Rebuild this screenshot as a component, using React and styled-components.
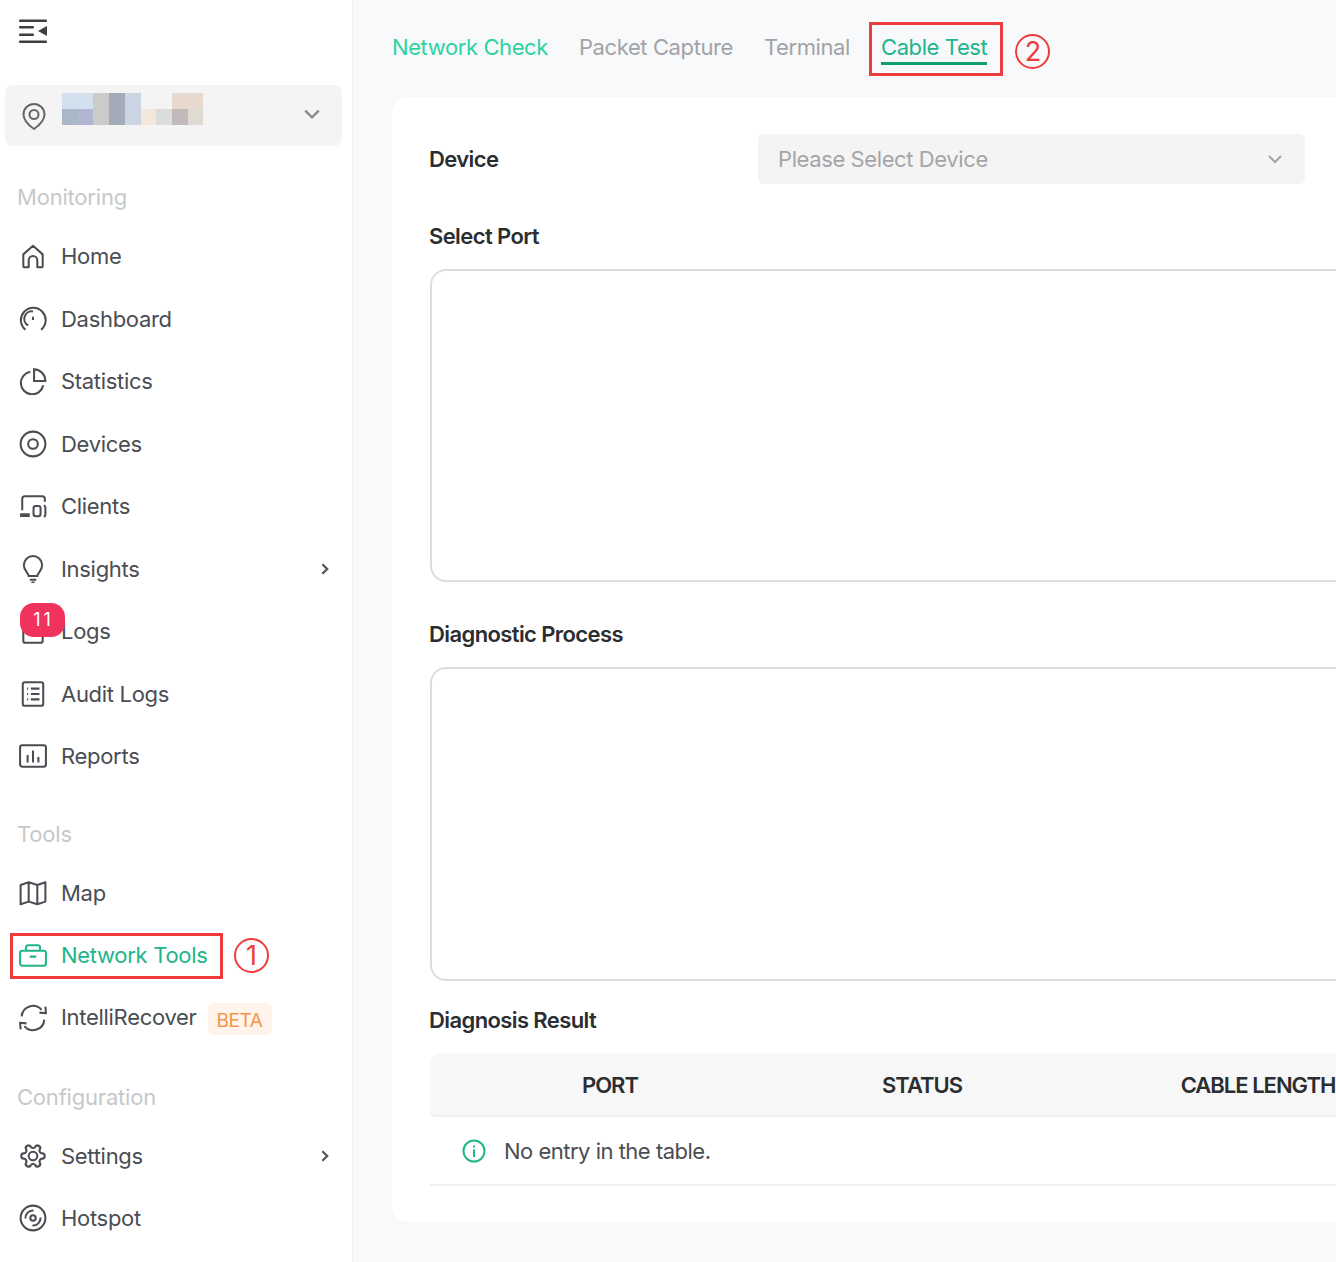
import styled, { createGlobalStyle } from "styled-components";

const GREEN = "#21b58a";
const RED = "#ee3b3b";

const icons = {
    home: <path d="M4 22V11.5L13 3.500l9 8V22a1.500 1.500 0 0 1-1.500 1.500H17V17a4 4 0 0 0-8 0v6.500H5.500A1.500 1.500 0 0 1 4 22z" strokeLinejoin="round" />,
    dashboard: <path d="M6 23a11.500 11.500 0 1 1 14.500 0M8.500 19a7 7 0 0 1 4.500-13M13 11v3" />,
    statistics: <path d="M10.500 4.500a10.500 10.500 0 1 0 12 12.500M14 2v11h10.500A11 11 0 0 0 14 2z" />,
    devices: <><circle cx="13" cy="13" r="11.500" /><circle cx="13" cy="13" r="4.500" /></>,
    clients: <><path d="M3 17V6.500A2.500 2.500 0 0 1 5.500 4h16A2.500 2.500 0 0 1 24 6.500V9" /><rect x="13.500" y="13" width="6.500" height="9.500" rx="2" /><path d="M23 12.500a2 2 0 0 1 1.500 2V21a2 2 0 0 1-1.500 2" /><path d="M1 21.500h9" strokeWidth="3.500" /></>,
    insights: <path d="M9 19.500c0-3-4.500-4.500-4.500-10a8.500 8.500 0 0 1 17 0c0 5.500-4.500 7-4.500 10zM10 23h6M11.500 25.500h3" />,
    logs: <path d="M4 8h18v14a2 2 0 0 1-2 2H6a2 2 0 0 1-2-2z" />,
    audit: <><rect x="3.500" y="2" width="19" height="22" rx="2" /><path d="M7.500 8h1M11 8h8M7.500 13h1M11 13h8M7.500 18h1M11 18h8" /></>,
    reports: <><rect x="1" y="3" width="24" height="20" rx="2" /><path d="M8 12v7M13 8v11M18 14v5" /></>,
    map: <path d="M1.500 5.500 9 3l8 2.500L24.500 3v18L17 23.500 9 21l-7.500 2.500zM9 3v18M17 5.500v18" strokeLinejoin="round" />,
    tools: <><rect x="1" y="9" width="24" height="14" rx="2" /><path d="M6.500 9V6a2 2 0 0 1 2-2h9a2 2 0 0 1 2 2v3M10 14.500h6" /></>,
    recover: <path d="M2.500 11.500A10.500 10.500 0 0 1 21 5.500M23.500 14.500A10.500 10.500 0 0 1 5 20.500M19 8l6 .5L24.500 2.500M7 18l-6-.5.500 6" />,
    settings: <><g transform="rotate(90 13 13) scale(1.083)" strokeWidth="1.850"><path d="M12.220 2h-.44a2 2 0 0 0-2 2v.18a2 2 0 0 1-1 1.730l-.43.250a2 2 0 0 1-2 0l-.150-.08a2 2 0 0 0-2.730.730l-.220.380a2 2 0 0 0 .730 2.730l.150.100a2 2 0 0 1 1 1.720v.510a2 2 0 0 1-1 1.740l-.150.090a2 2 0 0 0-.730 2.730l.220.380a2 2 0 0 0 2.730.730l.150-.08a2 2 0 0 1 2 0l.430.250a2 2 0 0 1 1 1.730V20a2 2 0 0 0 2 2h.440a2 2 0 0 0 2-2v-.18a2 2 0 0 1 1-1.730l.430-.250a2 2 0 0 1 2 0l.150.080a2 2 0 0 0 2.730-.730l.220-.390a2 2 0 0 0-.730-2.730l-.150-.080a2 2 0 0 1-1-1.740v-.5a2 2 0 0 1 1-1.740l.150-.090a2 2 0 0 0 .730-2.730l-.220-.380a2 2 0 0 0-2.730-.730l-.150.080a2 2 0 0 1-2 0l-.430-.250a2 2 0 0 1-1-1.730V4a2 2 0 0 0-2-2z" /></g><circle cx="13" cy="13" r="4" /></>,
    hotspot: <><circle cx="13" cy="13" r="11.500" /><path d="M6 13.500A7 7 0 0 1 13.500 6M20 12.500A7 7 0 0 1 12.500 20" /><circle cx="13" cy="13" r="2.500" /></>,
};

const monitoring = [
    { name: "Home", icon: "home" },
    { name: "Dashboard", icon: "dashboard" },
    { name: "Statistics", icon: "statistics" },
    { name: "Devices", icon: "devices" },
    { name: "Clients", icon: "clients" },
    { name: "Insights", icon: "insights", more: true },
    { name: "Logs", icon: "logs", count: 11 },
    { name: "Audit Logs", icon: "audit" },
    { name: "Reports", icon: "reports" },
];

const tools = [
    { name: "Map", icon: "map" },
    { name: "Network Tools", icon: "tools", active: true, mark: "1" },
    { name: "IntelliRecover", icon: "recover", beta: true },
];

const configuration = [
    { name: "Settings", icon: "settings", more: true },
    { name: "Hotspot", icon: "hotspot" },
];

const blurred = [
    [62, 93, 31, 16, "#d3e1ee"], [93, 93, 16, 16, "#cbcbcb"], [109, 93, 16, 16, "#a3aab8"], [125, 93, 16, 16, "#cad4e2"],
    [172, 93, 31, 16, "#e8d9ce"], [141, 93, 31, 16, "#f2f4f4"],
    [62, 109, 16, 16, "#a9b8c6"], [78, 109, 16, 16, "#b2b6d2"], [93, 109, 16, 16, "#cbcbcb"], [109, 109, 16, 16, "#a3aab8"], [125, 109, 16, 16, "#cad4e2"],
    [141, 109, 16, 16, "#f3e7dc"], [156, 109, 16, 16, "#dcdcdc"], [172, 109, 16, 16, "#c2b9bc"], [188, 109, 15, 16, "#dfdbd2"],
];

function Chevron({ size = 16, turned }) {
    return (
        <svg width={size} height={size} viewBox="0 0 16 16" fill="none" stroke="currentColor" strokeWidth={turned ? 2.600 : 2}>
            <path d={turned ? "M5 2.500 10.500 8 5 13.500" : "M2 5l6 6 6-6"} />
        </svg>
    );
}

function NavRow({ item }) {
    return (
        <NavItem $active={item.active}>
            <NavIcon width="28" height="28" viewBox="0 0 26 26" fill="none" stroke="currentColor" strokeWidth="1.900">
                {icons[item.icon]}
            </NavIcon>
            {item.count && <CountBadge>{item.count}</CountBadge>}
            <NavLabel $raised={item.beta}>{item.name}</NavLabel>
            {item.beta && <BetaTag>BETA</BetaTag>}
            {item.more && <More><Chevron size={14} turned /></More>}
            {item.active && <NavFrame />}
            {item.mark && <NavMark>{item.mark}</NavMark>}
        </NavItem>
    );
}

export default function App() {
    return (
        <>
            <GlobalStyle />
            <Page>
                <Sidebar>
                    <Toggle>
                        <svg width="28" height="26" viewBox="0 0 28 26" fill="#3f3f3f">
                            <rect x="0" y="1.500" width="28" height="2.500" rx="1" />
                            <rect x="0" y="8" width="15" height="2.500" rx="1" />
                            <rect x="0" y="15.500" width="15" height="2.500" rx="1" />
                            <rect x="0" y="22.500" width="28" height="2.500" rx="1" />
                            <path d="M28 8v10l-9-5z" />
                        </svg>
                    </Toggle>
                    <SitePicker>
                        <svg width="26" height="30" viewBox="0 0 26 30" fill="none" stroke="#666" strokeWidth="2">
                            <path d="M13 28 C6 23 2.500 18 2.500 13.500a10.500 10.500 0 0 1 21 0c0 4.500-3.500 9.500-10.500 14.500z" strokeLinejoin="round" />
                            <circle cx="13" cy="13.500" r="4.500" />
                        </svg>
                        <PickerChevron><Chevron size={18} /></PickerChevron>
                        <SiteName width="141" height="32" viewBox="62 93 141 32">
                            {blurred.map(([x, y, w, h, fill], i) => (
                                <rect key={i} x={x} y={y} width={w} height={h} fill={fill} />
                            ))}
                        </SiteName>
                    </SitePicker>

                    <SectionLabel $gap={37}>Monitoring</SectionLabel>
                    {monitoring.map(item => <NavRow key={item.name} item={item} />)}
                    <SectionLabel $gap={32}>Tools</SectionLabel>
                    {tools.map(item => <NavRow key={item.name} item={item} />)}
                    <SectionLabel $gap={33.5}>Configuration</SectionLabel>
                    {configuration.map(item => <NavRow key={item.name} item={item} />)}
                </Sidebar>

                <Main>
                    <Tabs>
                        <Tab $color="#2ed3a0">Network Check</Tab>
                        <Tab>Packet Capture</Tab>
                        <Tab>Terminal</Tab>
                        <Tab $color={GREEN} $selected>
                            Cable Test
                            <TabFrame />
                            <TabMark>2</TabMark>
                        </Tab>
                    </Tabs>

                    <Card>
                        <DeviceRow>
                            <FieldLabel>Device</FieldLabel>
                            <Select>
                                Please Select Device
                                <Chevron size={16} />
                            </Select>
                        </DeviceRow>

                        <SectionTitle $gap={38}>Select Port</SectionTitle>
                        <Panel $height={313} />
                        <SectionTitle $gap={38}>Diagnostic Process</SectionTitle>
                        <Panel $height={314} />
                        <SectionTitle $gap={25}>Diagnosis Result</SectionTitle>

                        <TableHead>
                            <HeadCell>PORT</HeadCell>
                            <HeadCell>STATUS</HeadCell>
                            <HeadCell>CABLE LENGTH</HeadCell>
                        </TableHead>
                        <EmptyRow>
                            <svg width="24" height="24" viewBox="0 0 24 24" fill="none" stroke={GREEN} strokeWidth="2">
                                <circle cx="12" cy="12" r="10.500" />
                                <path d="M12 10.500V18M12 6.500v2" />
                            </svg>
                            No entry in the table.
                        </EmptyRow>
                    </Card>
                </Main>
            </Page>
        </>
    );
}

const GlobalStyle = createGlobalStyle`
    html, body {
        margin: 0;
        padding: 0;
        background: #f8f9fb;
    }

    * {
        box-sizing: border-box;
    }
`;

const Page = styled.div`
    display: flex;
    width: 1336px;
    height: 1262px;
    overflow: hidden;
    font-family: Inter, "Liberation Sans", sans-serif;
`;

const Sidebar = styled.aside`
    flex: 0 0 353px;
    height: 100%;
    background: #fff;
    border-right: 1px solid #eceef0;
`;

const Toggle = styled.div`
    height: 85px;
    padding: 18px 0 0 19px;
`;

const SitePicker = styled.div`
    position: relative;
    display: flex;
    align-items: center;
    width: 337px;
    height: 61px;
    margin-left: 5px;
    padding-left: 16px;
    background: #f4f4f4;
    border-radius: 8px;
`;

const SiteName = styled.svg`
    position: absolute;
    left: 57px;
    top: 8px;
`;

const PickerChevron = styled.span`
    position: absolute;
    right: 21px;
    top: 20px;
    color: #8a8a8a;
`;

const SectionLabel = styled.div`
    height: 28px;
    margin: ${props => props.$gap}px 0 14px 17px;
    color: #c6c8ca;
    font-size: 22px;
    line-height: 28px;
    letter-spacing: -0.2px;
`;

const NavItem = styled.div`
    position: relative;
    display: flex;
    align-items: center;
    height: 62.5px;
    padding-left: 19px;
    color: ${props => props.$active ? GREEN : "#4a4d52"};
`;

const NavIcon = styled.svg`
    flex: none;
    margin-right: 14px;
`;

const NavLabel = styled.span`
    font-size: 22px;
    letter-spacing: -0.3px;
    margin-top: ${props => props.$raised ? "-2px" : "0"};
`;

const CountBadge = styled.span`
    position: absolute;
    left: 20px;
    top: 3px;
    width: 45px;
    height: 34px;
    padding-left: 2px;
    background: #f0325e;
    border-radius: 14px;
    color: #fff;
    font-size: 18px;
    line-height: 34px;
    letter-spacing: 3px;
    text-align: center;
`;

const BetaTag = styled.span`
    margin: 2px 0 0 11px;
    padding: 0 9px;
    height: 32px;
    background: #fff3ea;
    border-radius: 5px;
    color: #f5954a;
    font-size: 19px;
    line-height: 35px;
    letter-spacing: -0.4px;
`;

const More = styled.span`
    position: absolute;
    right: 20px;
    top: 24px;
    color: #555;
    line-height: 0;
`;

const NavFrame = styled.span`
    position: absolute;
    left: 10px;
    top: 8.5px;
    width: 213px;
    height: 46px;
    border: 3px solid ${RED};
`;

const NavMark = styled.span`
    position: absolute;
    left: 234px;
    top: 14px;
    width: 35px;
    height: 35px;
    border: 2px solid ${RED};
    border-radius: 50%;
    color: ${RED};
    font-size: 27px;
    line-height: 31px;
    text-align: center;
`;

const Main = styled.main`
    flex: 1;
    min-width: 0;
    overflow: hidden;
    padding-left: 39px;
`;

const Tabs = styled.nav`
    display: flex;
    gap: 31px;
    height: 97px;
    padding-top: 33px;
`;

const Tab = styled.div`
    position: relative;
    height: 32px;
    color: ${props => props.$color || "#a1a3a6"};
    font-size: 22px;
    line-height: 28px;
    letter-spacing: -0.4px;
    white-space: nowrap;
    border-bottom: ${props => props.$selected ? "3px solid #0ea06f" : "none"};
`;

const TabFrame = styled.span`
    position: absolute;
    left: -12px;
    right: -16px;
    top: -11px;
    height: 54px;
    border: 3px solid ${RED};
`;

const TabMark = styled.span`
    position: absolute;
    left: calc(100% + 28px);
    top: 1px;
    width: 35px;
    height: 35px;
    border: 2px solid ${RED};
    border-radius: 50%;
    color: ${RED};
    font-size: 27px;
    line-height: 31px;
    letter-spacing: 0;
    text-align: center;
`;

const Card = styled.section`
    width: 1100px;
    height: 1125px;
    padding: 37px 0 0 37px;
    background: #fff;
    border-radius: 16px;
`;

const DeviceRow = styled.div`
    display: flex;
    align-items: center;
    height: 50px;
`;

const FieldLabel = styled.div`
    flex: 0 0 329px;
    color: #2b2d30;
    font-size: 22px;
    font-weight: 600;
    letter-spacing: -0.6px;
`;

const Select = styled.div`
    display: flex;
    align-items: center;
    justify-content: space-between;
    width: 547px;
    height: 50px;
    padding: 0 22px 0 20px;
    background: #f4f4f4;
    border-radius: 6px;
    color: #a3a5a8;
    font-size: 22px;
    letter-spacing: -0.4px;
`;

const SectionTitle = styled.div`
    height: 28px;
    margin: ${props => props.$gap}px 0 19px;
    color: #2b2d30;
    font-size: 22px;
    font-weight: 600;
    line-height: 28px;
    letter-spacing: -0.6px;
`;

const Panel = styled.div`
    height: ${props => props.$height}px;
    margin-left: 1px;
    background: #fff;
    border: 2px solid #dcddde;
    border-radius: 16px;
`;

const TableHead = styled.div`
    display: grid;
    grid-template-columns: 360px 264px 408px;
    height: 64px;
    margin-left: 1px;
    padding-top: 2px;
    background: #f7f7f7;
    border-bottom: 2px solid #efefef;
    border-radius: 12px 0 0 6px;
`;

const HeadCell = styled.div`
    display: flex;
    align-items: center;
    justify-content: center;
    color: #2b2d30;
    font-size: 22px;
    font-weight: 600;
    letter-spacing: -1px;
    white-space: nowrap;
`;

const EmptyRow = styled.div`
    display: flex;
    align-items: center;
    gap: 18px;
    height: 69px;
    margin-left: 1px;
    padding-left: 32px;
    border-bottom: 2px solid #efefef;
    color: #4a4d52;
    font-size: 22px;
    letter-spacing: -0.5px;
`;
